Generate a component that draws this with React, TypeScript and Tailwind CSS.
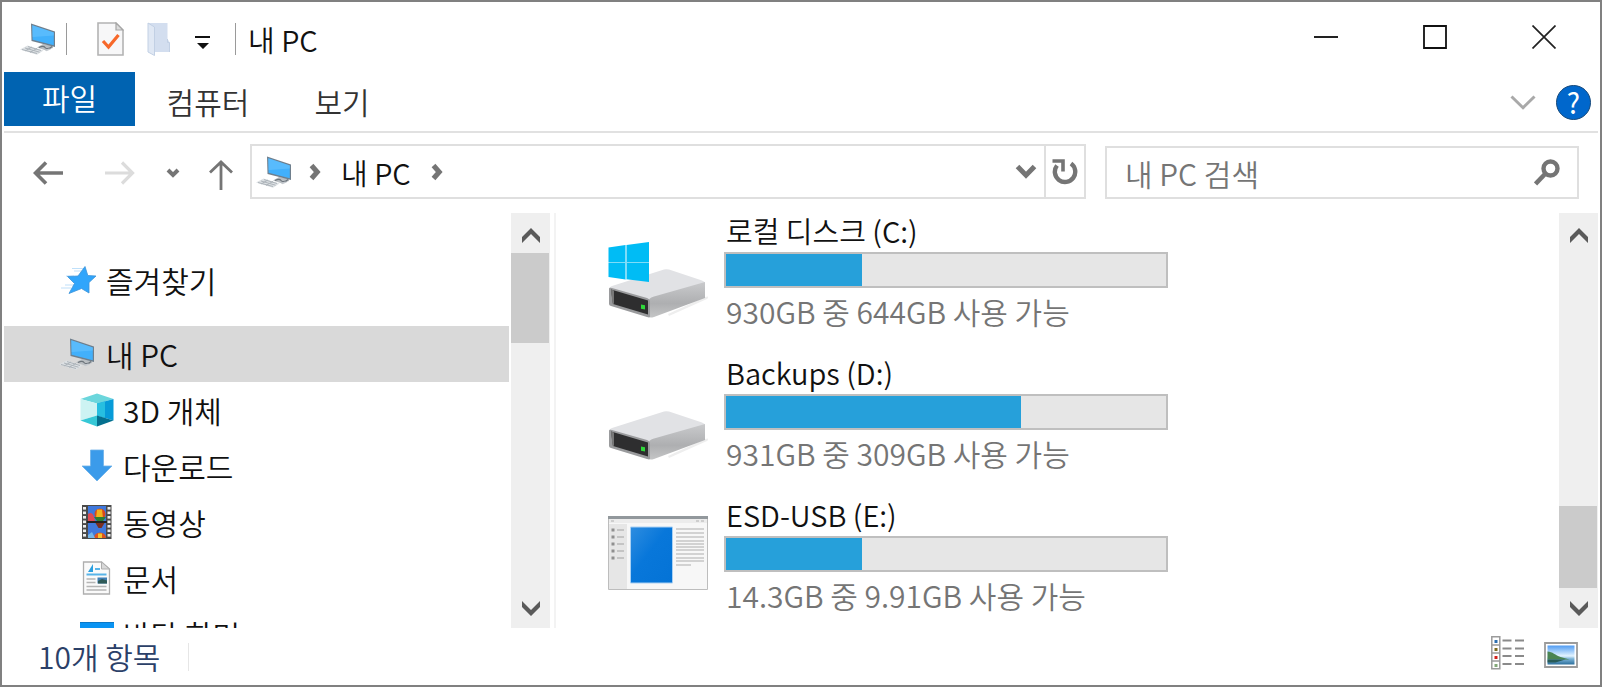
import React from "react";

function PcIcon() {
  return (
    <svg width="36" height="32" viewBox="0 0 36 32" aria-hidden="true" className="shrink-0">
      <path d="M17 24.5l6-3.5 10 1.500v2.500l-7 2.500z" fill="#b9bec2" />
      <path d="M19 24.500c3-1.500 5-1.500 6 0s4 2 7-1" fill="none" stroke="#6d757c" strokeWidth="1.200" />
      <path d="M11 .5l24 8v15.500L11.500 18z" fill="#6f7f8d" />
      <path d="M12.300 2.200l21.500 7.200v12.800L12.600 16.700z" fill="#42b0fb" />
      <path d="M12.300 2.200l21.500 7.200v3L12.600 14z" fill="#6cc4ff" opacity=".55" />
      <path d="M0 26.500L7.500 22.500l16 5-6.500 4.200z" fill="#dde1e4" />
      <path d="M2 26.500l15 4M5 25l14.500 4.200M8 23.600l13 3.900M5 28l7-4M10 29.400l7-4" fill="none" stroke="#adb4ba" strokeWidth="1" />
      <path d="M25 27l4-1.500 2 .8-4.500 2z" fill="#c5cacf" />
    </svg>
  );
}

function CheckDocIcon() {
  return (
    <svg width="27" height="34" viewBox="0 0 27 34" aria-hidden="true">
      <path d="M1 1h18l7 7v25H1z" fill="#f7f7f8" stroke="#b3b3b3" strokeWidth="1.600" />
      <path d="M19 1v7h7z" fill="#dcdcdc" stroke="#a5a5a5" strokeWidth="1.200" />
      <path d="M6 19l5.500 6L21.500 13" fill="none" stroke="#f7682a" strokeWidth="3.200" />
    </svg>
  );
}

function FolderIcon() {
  return (
    <svg width="24" height="34" viewBox="0 0 24 34" aria-hidden="true">
      <path d="M1 1h19.500v16l2 3v10H8z" fill="#d3deef" />
      <path d="M1 1l6.500 4v28.500L1 30z" fill="#e0e8f4" stroke="#c2d0e4" strokeWidth="1" />
      <path d="M20.500 17v3.500h2V30" fill="none" stroke="#c2d0e4" strokeWidth="1" />
    </svg>
  );
}

function StarIcon() {
  return (
    <svg width="36" height="30" viewBox="0 0 36 30" aria-hidden="true" className="shrink-0">
      <path d="M11 3.500h11M13 6h9M5 11h8M0 23h10M4 20h9" stroke="#bfe0fa" strokeWidth="1.200" />
      <path d="M24 1.500l2.800 9 8.200.5-7 6.500 0 10.500-7.500-4.500L8 28.500l5.500-10L6.500 11.500l10.500-.500z" fill="#30a5fb" stroke="#3c93d8" strokeWidth=".8" strokeLinejoin="round" />
    </svg>
  );
}

function CubeIcon() {
  return (
    <svg width="34" height="34" viewBox="0 0 34 34" aria-hidden="true" className="shrink-0">
      <path d="M17 .5L33.500 6 17 10.500.5 6z" fill="#6bd6dc" />
      <path d="M.5 6L17 10.500v12L.5 27.500z" fill="#cdf3f3" />
      <path d="M33.500 6L17 10.500v12l16.500 5z" fill="#079bd8" />
      <path d="M17 10.500L25 8.300v16.600l-8-2.400z" fill="#27bfe0" />
      <path d="M.5 27.500l16.500-5v11z" fill="#36c8d6" />
      <path d="M33.500 27.500l-16.500-5v11z" fill="#04708f" />
    </svg>
  );
}

function DownloadIcon() {
  return (
    <svg width="34" height="34" viewBox="0 0 34 34" aria-hidden="true" className="shrink-0">
      <path d="M10.500 1h13v16H32L17 32 2 17h8.500z" fill="#3b9bea" stroke="#6fb1e8" strokeWidth=".8" />
    </svg>
  );
}

function FilmIcon() {
  const holes = [2, 6.500, 11, 15.500, 20, 24.500, 29];
  return (
    <svg width="34" height="34" viewBox="0 0 34 34" aria-hidden="true" className="shrink-0">
      <path d="M2 0h29.500v34H2z" fill="#4a4a4a" />
      {holes.map((y) => (
        <g key={y} fill="#ededed">
          <path d={`M3 ${y}h3v2.600h-3z`} />
          <path d={`M27.500 ${y}h3v2.600h-3z`} />
        </g>
      ))}
      <path d="M8 1h18v15H8zM8 18h18v15H8z" fill="#3f78dc" />
      <path d="M8 9c4-3 6 1 7 7H8z" fill="#e04a52" />
      <circle cx="20" cy="9" r="5.500" fill="#d84a1c" />
      <path d="M17 4.500h5l1 9h-7z" fill="#f1b31c" />
      <path d="M14 12h12l-3 4h-6z" fill="#2d7d32" />
      <path d="M15.500 18h9l-3 5h-3z" fill="#7a2f21" />
      <path d="M14 33a6 5.500 0 0 1 12 0z" fill="#e0541e" />
      <path d="M18 28.500h4V33h-4z" fill="#f4c430" />
      <path d="M8 30l4-3 3 6H8z" fill="#74b7e8" />
      <path d="M7 16h20v2H7z" fill="#222" />
    </svg>
  );
}

function DocumentIcon() {
  return (
    <svg width="34" height="34" viewBox="0 0 34 34" aria-hidden="true" className="shrink-0">
      <path d="M3.500 1h18l8 7v25h-26z" fill="#fafafa" stroke="#aeaeae" strokeWidth="1.300" />
      <path d="M21.500 1v7h8z" fill="#d9d9d9" stroke="#aeaeae" />
      <path d="M8 11L13 3v8z" fill="#2a9fe0" />
      <path d="M15 8h5M6.500 13.500h20" stroke="#58b4e8" strokeWidth="2" />
      <path d="M6.500 18h9M6.500 21.500h9M6.500 25.500h20M6.500 29h20" stroke="#b5b5b5" strokeWidth="1.400" />
      <path d="M17.500 16.500h9.500v6h-9.500z" fill="#3f7fb5" />
      <path d="M18 20l4-2 5 1.500v3h-9z" fill="#2f5a57" />
    </svg>
  );
}

function DesktopIcon() {
  return (
    <svg width="34" height="24" viewBox="0 0 34 24" aria-hidden="true" className="shrink-0">
      <path d="M0 0h34v24H0z" fill="#0a94f3" />
      <path d="M0 0h34v1H0z" fill="#0a79c9" />
    </svg>
  );
}

function DriveIcon({ system = false }: { system?: boolean }) {
  const id = system ? "side-system" : "side-plain";
  return (
    <svg width="100" height="106" viewBox="0 0 100 106" aria-hidden="true" className="shrink-0">
      <defs>
        <linearGradient id={id} x1="0" y1="0" x2="0" y2="1">
          <stop offset="0" stopColor="#c9cacc" />
          <stop offset=".6" stopColor="#aeafb1" />
          <stop offset="1" stopColor="#c4c5c6" />
        </linearGradient>
      </defs>
      <path d="M60 100L97 83l5-1-3 3-38 17z" fill="#eeeeee" />
      <path d="M1 75Q1 73 4 72L56 55.500Q58 55 61 55.500L94 66.500Q97 67.500 97 69L42 87z" fill="#e1e2e5" />
      <path d="M41 86Q41 84 46 82.500L97 68v16L46 103Q41 104.500 41 102z" fill={`url(#${id})`} />
      <path d="M1 75Q1 73 4 74L39 84Q42 85 42 88v14.500q0 1.500-3 .5L3 92Q1 91.500 1 90z" fill="#9a9b9d" />
      <path d="M3 75.500l37 11v14L5 90z" fill="#2e2e2f" />
      <path d="M3 75.500l3 1V90l-1.500-.500z" fill="#777" />
      <path d="M33 90.500l4 .8v4.200l-4-.8z" fill="#2fd83a" />
      {system && (
        <g fill="#00bcf5">
          <path d="M.5 33.500L17.500 31v17H.5z" />
          <path d="M18.500 30.900L41 28v20H18.500z" />
          <path d="M.5 49h17v16.500L.5 63z" />
          <path d="M18.500 49H41v19l-22.500-2.700z" />
          <path d="M.5 48H41v1H.5zM17.500 31h1v34.500h-1z" fill="#7fdcf8" />
        </g>
      )}
    </svg>
  );
}

function SetupIcon() {
  const lines = [31, 35, 39, 43, 46, 49, 52, 56, 60, 63];
  return (
    <svg width="100" height="106" viewBox="0 0 100 106" aria-hidden="true" className="shrink-0">
      <defs>
        <linearGradient id="panel" x1="0" y1="0" x2="1" y2="1">
          <stop offset="0" stopColor="#2e8de0" />
          <stop offset=".45" stopColor="#0877da" />
          <stop offset="1" stopColor="#0473d6" />
        </linearGradient>
      </defs>
      <path d="M.5 18.500h99v73H.5z" fill="#f7f7f7" stroke="#bdbdbd" />
      <path d="M1 26h18v65H1z" fill="#e6e6e6" />
      <path d="M0 18h100v3H0z" fill="#92989c" />
      <path d="M1 21h98v4H1z" fill="#ececec" />
      <path d="M3 23h3M88 23h3M93 23h3" stroke="#c3c3c3" strokeWidth="1.500" />
      {[32, 39, 46, 53, 60].map((y) => (
        <g key={y}>
          <path d={`M3.500 ${y}h3`} stroke="#8f8f8f" strokeWidth="3" />
          <path d={`M9 ${y}h7`} stroke="#b9b9b9" strokeWidth="1.500" />
        </g>
      ))}
      <path d="M22.500 29h42v56h-42z" fill="url(#panel)" stroke="#a9d0f3" />
      {lines.map((y) => (
        <path key={y} d={`M68 ${y}h28`} stroke="#c2c2c2" strokeWidth="1.400" />
      ))}
      <path d="M68 67h15" stroke="#c2c2c2" strokeWidth="1.400" />
    </svg>
  );
}

function Chevron({ dir, w, h, stroke, color }: { dir: "down" | "right"; w: number; h: number; stroke: number; color: string }) {
  const p = stroke / 2;
  const points =
    dir === "down"
      ? `${p},${p} ${w / 2},${h - stroke * 0.75} ${w - p},${p}`
      : `${p},${p} ${w - stroke * 0.75},${h / 2} ${p},${h - p}`;
  return (
    <svg width={w} height={h} viewBox={`0 0 ${w} ${h}`} aria-hidden="true">
      <polyline points={points} fill="none" stroke={color} strokeWidth={stroke} />
    </svg>
  );
}

function ScrollArrow({ dir }: { dir: "up" | "down" }) {
  return (
    <svg width="18" height="15" viewBox="0 0 18 15" aria-hidden="true">
      <path d={dir === "up" ? "M9 0l9 9v6L9 6 0 15V9z" : "M9 15l9-9V0L9 9 0 0v6z"} fill="#5a5a5a" />
    </svg>
  );
}

function Scrollbar({ end = false }: { end?: boolean }) {
  return (
    <div className="flex w-[39px] shrink-0 flex-col bg-[#efefef]">
      <button aria-label="위로 스크롤" className="flex h-10 shrink-0 items-center justify-center pt-1">
        <ScrollArrow dir="up" />
      </button>
      <div className={end ? "flex flex-1 flex-col justify-end" : "flex flex-1 flex-col"}>
        <div className={end ? "mr-px h-[82px] bg-[#cbcbcb]" : "mr-px h-[90px] bg-[#cbcbcb]"} />
      </div>
      <button aria-label="아래로 스크롤" className="flex h-10 shrink-0 items-center justify-center">
        <ScrollArrow dir="down" />
      </button>
    </div>
  );
}

function TitleBar() {
  return (
    <header className="flex h-[70px] shrink-0 items-start">
      <div className="flex h-[74px] items-center pl-4">
        <PcIcon />
        <div className="ml-[10px] h-8 w-px bg-[#9a9a9a]" />
        <button aria-label="속성" className="ml-[30px]"><CheckDocIcon /></button>
        <button aria-label="새 폴더" className="ml-[23px]"><FolderIcon /></button>
        <button aria-label="빠른 실행 도구 모음 사용자 지정" className="ml-6 pt-2">
          <svg width="15" height="14" viewBox="0 0 15 14" aria-hidden="true">
            <path d="M0 0h15v2H0zM2 7h12l-6 6z" fill="#111" />
          </svg>
        </button>
        <div className="ml-[25px] h-8 w-px bg-[#9a9a9a]" />
        <h1 className="ml-3 text-[29px] leading-10">내 PC</h1>
      </div>
      <div className="ml-auto flex h-[70px]">
        <button aria-label="최소화" className="flex w-[109px] items-center justify-center">
          <svg width="24" height="24" viewBox="0 0 24 24" aria-hidden="true"><path d="M0 12h24" stroke="#222" strokeWidth="2" /></svg>
        </button>
        <button aria-label="최대화" className="flex w-[109px] items-center justify-center">
          <svg width="24" height="24" viewBox="0 0 24 24" aria-hidden="true"><path d="M1 1h22v22H1z" fill="none" stroke="#111" strokeWidth="1.800" /></svg>
        </button>
        <button aria-label="닫기" className="flex w-[109px] items-center justify-center">
          <svg width="24" height="24" viewBox="0 0 24 24" aria-hidden="true"><path d="M.5.5l23 23M23.500.5l-23 23" stroke="#222" strokeWidth="1.700" /></svg>
        </button>
      </div>
    </header>
  );
}

function Ribbon() {
  return (
    <div className="flex h-[61px] shrink-0 items-start border-b-2 border-[#e1e1e1]">
      <div className="flex text-[30px]">
        <button className="h-[54px] w-[131px] bg-[#0063b1] pb-1 leading-8 text-white">파일</button>
        <button className="h-[59px] w-[146px] text-[#333]">컴퓨터</button>
        <button className="h-[59px] w-[122px] text-[#333]">보기</button>
      </div>
      <div className="ml-auto flex h-[60px] items-center gap-5 pr-[7px]">
        <button aria-label="리본 확장"><Chevron dir="down" w={26} h={15} stroke={3} color="#a9a9a9" /></button>
        <button aria-label="도움말" className="flex size-[35px] items-center justify-center rounded-full border border-[#16497b] bg-[#0067cc] text-[28px] leading-8 font-normal text-white">?</button>
      </div>
    </div>
  );
}

function NavBar() {
  return (
    <div className="flex h-20 shrink-0 items-center pr-[19px] pl-[29px]">
      <button aria-label="뒤로">
        <svg width="30" height="24" viewBox="0 0 30 24" aria-hidden="true"><path d="M13 1.500L2.500 12 13 22.500M2 12h28" fill="none" stroke="#757575" strokeWidth="3.600" /></svg>
      </button>
      <button aria-label="앞으로" className="ml-[42px]">
        <svg width="30" height="24" viewBox="0 0 30 24" aria-hidden="true"><path d="M17 1.500L27.500 12 17 22.500M28 12H0" fill="none" stroke="#dcdcdc" strokeWidth="3.200" /></svg>
      </button>
      <button aria-label="최근 위치" className="ml-[31px]"><Chevron dir="down" w={14} h={10} stroke={4} color="#757575" /></button>
      <button aria-label="위로" className="ml-[29px] pt-1">
        <svg width="24" height="30" viewBox="0 0 24 30" aria-hidden="true"><path d="M1 12.500L12 2l11 10.500M12 2v28" fill="none" stroke="#757575" strokeWidth="2.800" /></svg>
      </button>
      <div className="mb-[3px] ml-[17px] flex h-[55px] flex-1 border-2 border-[#dfdfdf]">
        <div className="flex flex-1 items-center pl-1">
          <PcIcon />
          <span className="ml-[17px] flex"><Chevron dir="right" w={12} h={18} stroke={5} color="#757575" /></span>
          <button className="ml-5 text-[29px] leading-10">내 PC</button>
          <span className="ml-5 flex"><Chevron dir="right" w={12} h={18} stroke={5} color="#757575" /></span>
          <button aria-label="이전 위치" className="mr-[7px] ml-auto"><Chevron dir="down" w={22} h={15} stroke={5} color="#757575" /></button>
        </div>
        <button aria-label="새로 고침" className="flex w-10 items-center justify-center border-l-2 border-[#dfdfdf]">
          <svg width="26" height="26" viewBox="0 0 26 26" aria-hidden="true">
            <path d="M19 4.500A10.200 10.200 0 1 1 5 6.500" fill="none" stroke="#757575" strokeWidth="4.400" />
            <path d="M.5 2h10.500v10.500" fill="none" stroke="#757575" strokeWidth="3.600" />
          </svg>
        </button>
      </div>
      <label className="mb-px ml-[19px] flex h-[53px] w-[474px] items-center border-2 border-[#dfdfdf] pr-[17px] pl-[18px]">
        <input aria-label="내 PC 검색" placeholder="내 PC 검색" className="min-w-0 flex-1 bg-transparent text-[30px] leading-10 outline-none placeholder:text-[#757575]" />
        <svg width="26" height="27" viewBox="0 0 26 27" aria-hidden="true">
          <circle cx="16.500" cy="9.500" r="7" fill="none" stroke="#757575" strokeWidth="4.400" />
          <path d="M11.500 14.500L1.500 25" stroke="#757575" strokeWidth="4.600" />
        </svg>
      </label>
    </div>
  );
}

const folders = [
  { name: "3D 개체", icon: <CubeIcon /> },
  { name: "다운로드", icon: <DownloadIcon /> },
  { name: "동영상", icon: <FilmIcon /> },
  { name: "문서", icon: <DocumentIcon /> },
  { name: "바탕 화면", icon: <DesktopIcon /> },
];

function Sidebar() {
  return (
    <nav className="w-[505px] shrink-0 overflow-hidden pt-[39px] text-[30px]">
      <a href="#favorites" className="flex h-14 items-center gap-[9px] pl-[57px]"><StarIcon />즐겨찾기</a>
      <a href="#pc" aria-current="page" className="mt-[18px] flex h-14 items-center gap-[11px] bg-[#d9d9d9] pl-[55px]"><PcIcon />내 PC</a>
      {folders.map((folder) => (
        <a key={folder.name} href="#folder" className="flex h-14 items-center gap-[9px] pl-[76px]">{folder.icon}{folder.name}</a>
      ))}
    </nav>
  );
}

const drives = [
  { name: "로컬 디스크 (C:)", usage: "930GB 중 644GB 사용 가능", used: 31, icon: <DriveIcon system /> },
  { name: "Backups (D:)", usage: "931GB 중 309GB 사용 가능", used: 67, icon: <DriveIcon /> },
  { name: "ESD-USB (E:)", usage: "14.3GB 중 9.91GB 사용 가능", used: 31, icon: <SetupIcon /> },
];

function DriveList() {
  return (
    <main className="min-w-0 flex-1 overflow-hidden pt-px pl-[52px]">
      <ul className="flex flex-col gap-[18px]">
        {drives.map((drive) => (
          <li key={drive.name} className="flex gap-4">
            {drive.icon}
            <div className="w-[444px]">
              <div className="pb-1.5 pl-0.5 text-[29px] leading-8 whitespace-nowrap">{drive.name}</div>
              <div role="meter" aria-label={drive.name} aria-valuemin={0} aria-valuemax={100} aria-valuenow={drive.used} className="h-9 border-2 border-[#bfbfbf] bg-[#e6e6e6]">
                <div className="h-full bg-[#26a0da]" style={{ width: `${drive.used}%` }} />
              </div>
              <div className="pb-1 pl-0.5 text-[30px] leading-[46px] whitespace-nowrap text-[#757575]">{drive.usage}</div>
            </div>
          </li>
        ))}
      </ul>
    </main>
  );
}

function StatusBar() {
  return (
    <footer className="flex h-[57px] shrink-0 items-center pr-5 pl-[34px] text-[30px] text-[#2b4068]">
      <span>10개 항목</span>
      <div className="ml-7 h-7 w-px bg-[#e6e6e6]" />
      <button aria-label="자세히" className="mb-2 ml-auto">
        <svg width="33" height="34" viewBox="0 0 33 34" aria-hidden="true">
          <path d="M.8.8h8v32h-8zM.8 9h8M.8 17h8M.8 25h8" fill="#fff" stroke="#9b9b9b" strokeWidth="1.500" />
          <path d="M3.500 4h3v3h-3z" fill="#2c6fb0" />
          <path d="M3.500 12h3v3h-3z" fill="#7c6a1d" />
          <path d="M3.500 20h3v3h-3z" fill="#d3221c" />
          <path d="M3.500 28h3v3h-3z" fill="#83a878" />
          <path d="M11.500 4.500h9M24 4.500h9M11.500 12.500h9M24 12.500h9M11.500 20h9M24 20h9M11.500 28h9M24 28h9" stroke="#8a8a8a" strokeWidth="2" />
        </svg>
      </button>
      <button aria-label="큰 아이콘" className="mb-1 ml-5">
        <svg width="34" height="26" viewBox="0 0 34 26" aria-hidden="true">
          <defs>
            <linearGradient id="sky" x1="0" y1="0" x2="0" y2="1">
              <stop offset="0" stopColor="#4f9bf2" />
              <stop offset=".55" stopColor="#e3f4ff" />
              <stop offset=".7" stopColor="#7db4d8" />
              <stop offset="1" stopColor="#2c6f9c" />
            </linearGradient>
          </defs>
          <path d="M1 1h32v24H1z" fill="#fff" stroke="#9b9b9b" strokeWidth="1.800" />
          <path d="M3.500 3.500h27v19h-27z" fill="url(#sky)" />
          <path d="M3.500 9.500c5 0 8 4 13 5.500l9 2.500h-22z" fill="#4a8452" />
          <path d="M3.500 17.500h18l-10 3h-8z" fill="#285b56" />
        </svg>
      </button>
    </footer>
  );
}

export default function App() {
  return (
    <div className="flex h-screen flex-col border-2 border-[#808080] bg-white px-0.5 font-['Noto_Sans_CJK_KR',sans-serif] font-[350] text-[#111]">
      <TitleBar />
      <Ribbon />
      <NavBar />
      <div className="flex min-h-0 flex-1">
        <Sidebar />
        <div className="ml-0.5 flex"><Scrollbar /></div>
        <div className="ml-1 w-0.5 bg-[#f3f3f3]" />
        <DriveList />
        <Scrollbar end />
      </div>
      <StatusBar />
    </div>
  );
}
